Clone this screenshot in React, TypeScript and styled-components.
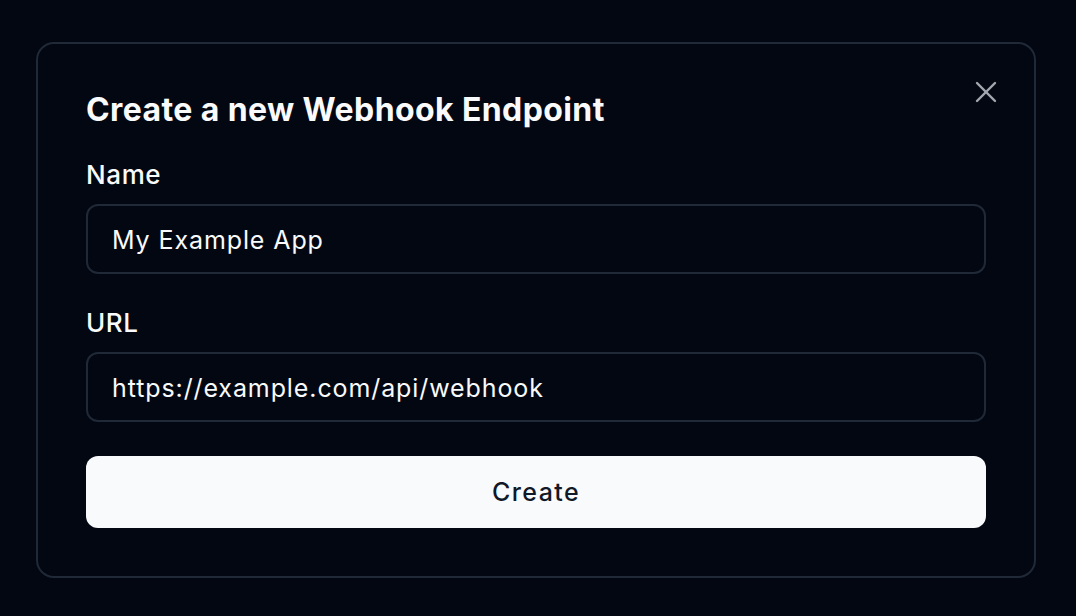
import * as React from "react";
import styled, { createGlobalStyle } from "styled-components";

const colors = {
  page: "#030712",
  border: "#1f2937",
  text: "#f9fafb",
  muted: "#a3a7ae",
  buttonText: "#111827",
};

const GlobalStyle = createGlobalStyle`
  html, body {
    margin: 0;
    padding: 0;
    background: ${colors.page};
  }
  body {
    font-family: Inter, "Noto Sans", sans-serif;
    color: ${colors.text};
    -webkit-font-smoothing: antialiased;
  }
  * {
    box-sizing: border-box;
  }
`;

const Page = styled.div`
  min-height: 616px;
  padding: 42px 0 0 36px;
`;

const Dialog = styled.div`
  position: relative;
  width: 1000px;
  border: 2px solid ${colors.border};
  border-radius: 18px;
  padding: 48px 48px 48px;
  display: flex;
  flex-direction: column;
`;

const CloseButton = styled.button`
  position: absolute;
  top: 30px;
  right: 30px;
  width: 36px;
  height: 36px;
  padding: 0;
  border: none;
  background: transparent;
  color: ${colors.muted};
  display: flex;
  align-items: center;
  justify-content: center;
  cursor: pointer;
`;

const Title = styled.h2`
  margin: 0 0 35px;
  font-size: 32px;
  line-height: 36px;
  font-weight: 700;
  letter-spacing: 0.4px;
`;

const Field = styled.div<{ $spacing: number }>`
  display: flex;
  flex-direction: column;
  gap: 17px;
  margin-bottom: ${(p) => p.$spacing}px;
`;

const Label = styled.label`
  font-size: 26px;
  line-height: 24px;
  font-weight: 500;
  letter-spacing: 0.6px;
`;

const Input = styled.input`
  height: 70px;
  padding: 2px 24px 0;
  border: 2px solid ${colors.border};
  border-radius: 12px;
  background: transparent;
  color: ${colors.text};
  font-family: inherit;
  font-size: 25px;
  letter-spacing: 0.9px;
  outline: none;
`;

const SubmitButton = styled.button`
  height: 72px;
  border: none;
  border-radius: 12px;
  background: ${colors.text};
  color: ${colors.buttonText};
  font-family: inherit;
  font-size: 25px;
  font-weight: 500;
  letter-spacing: 1.4px;
  cursor: pointer;
`;

const fields = [
  { id: "name", label: "Name", value: "My Example App", spacing: 37 },
  { id: "url", label: "URL", value: "https://example.com/api/webhook", spacing: 34 },
];

export default function App() {
  return (
    <>
      <GlobalStyle />
      <Page>
        <Dialog>
          <CloseButton aria-label="Close">
            <svg width="36" height="36" viewBox="0 0 24 24" fill="none" stroke="currentColor" strokeWidth="1.6" strokeLinecap="round">
              <path d="M18 6 6 18" />
              <path d="m6 6 12 12" />
            </svg>
          </CloseButton>
          <Title>Create a new Webhook Endpoint</Title>
          {fields.map((f) => (
            <Field key={f.id} $spacing={f.spacing}>
              <Label htmlFor={f.id}>{f.label}</Label>
              <Input id={f.id} defaultValue={f.value} />
            </Field>
          ))}
          <SubmitButton>Create</SubmitButton>
        </Dialog>
      </Page>
    </>
  );
}
